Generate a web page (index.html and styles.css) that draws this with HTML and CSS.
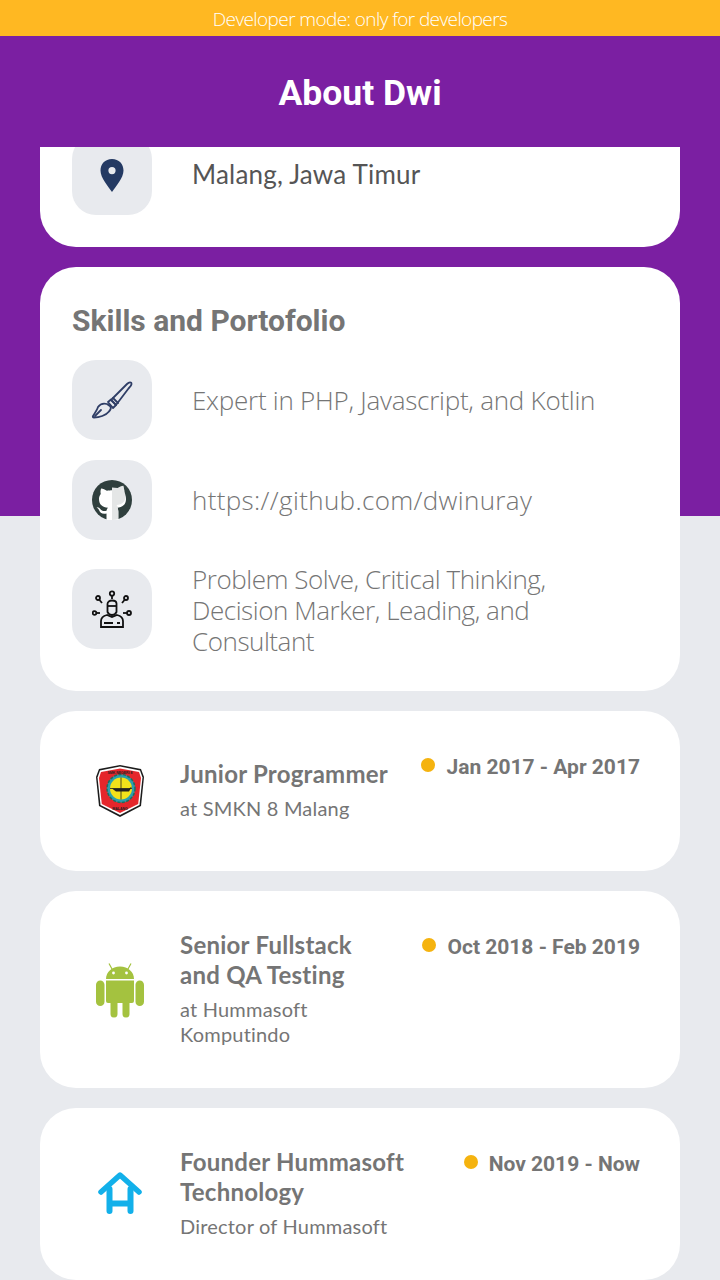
FILE: index.html
```html
<!DOCTYPE html>
<html lang="en">
<head>
<meta charset="utf-8">
<title>About Dwi</title>
<link rel="stylesheet" href="styles.css">
</head>
<body>
<div class="page">
  <div class="banner">Developer mode: only for developers</div>
  <div class="backdrop"></div>
  <header class="header"><h1>About Dwi</h1></header>
  <main class="scroll">
    <section class="card card-top">
      <div class="row">
        <div class="tile">
          <svg width="26" height="34" viewBox="0 0 26 34"><path fill="#243a63" fill-rule="evenodd" d="M13 1C6 1 1.500 6 1.500 12.500 1.500 20 9 28 13 34c4-6 11.500-14 11.500-21.500C24.500 6 20 1 13 1zm0 8a3.600 3.600 0 1 1 0 7.200A3.600 3.600 0 0 1 13 9z"/></svg>
        </div>
        <p class="location">Malang, Jawa Timur</p>
      </div>
    </section>
    <section class="card card-skills">
      <h2>Skills and Portofolio</h2>
      <div class="row">
        <div class="tile">
          <svg width="42" height="40" viewBox="0 0 42 40" fill="none" stroke="#2f3e66" stroke-width="1.800" stroke-linejoin="round" stroke-linecap="round"><path d="M20 20 36 4c2-2 4.500-2.500 4.500 0 0 1.500-1.500 3-3 4.500L25 25z"/><path d="M17 22l3-2.500 5 5.500-3 3z"/><path d="M22 18l5 5"/><path d="M16 24c-4-1-7 0-9 3-1 3-3 6-5 9-.500 1 0 1.500 1 1.500 5 0 12-2 15-6 2-2 2-4 1.500-5z"/><path d="M4 36l6-6"/></svg>
        </div>
        <p class="skill">Expert in PHP, Javascript, and Kotlin</p>
      </div>
      <div class="row">
        <div class="tile">
          <svg width="40" height="40" viewBox="0 0 40 40"><circle cx="20" cy="20" r="20" fill="#2f3f3d"/><path fill="#fff" d="M14.500 39.300v-5.800c-4.500 1-6.500-1-7.500-3.500-.6-1.300-1.500-2-2.500-2.700 1.500-.5 3 .3 4 2 1.200 1.800 3.500 2.200 6 1.400.2-1.200.7-2.200 1.500-2.900-5.500-.7-9-3-9-8.800 0-2 .7-3.700 1.800-5-.3-1-.6-3 .3-5.500 2 0 4 1 5.800 2.300 3-.8 8.200-.8 11.200 0 1.800-1.300 3.800-2.300 5.800-2.300.9 2.500.6 4.500.3 5.500 1.100 1.300 1.800 3 1.800 5 0 5.800-3.500 8.100-9 8.800 1 .9 1.500 2.300 1.500 4v8.500c-3.500 1-8 1-11.800 0z"/><path fill="#e4e6e6" d="M20 7.500c1.900 0 3.800.2 5.600.6 1.800-1.300 3.800-2.300 5.800-2.300.9 2.500.6 4.500.3 5.500 1.100 1.300 1.800 3 1.800 5 0 5.800-3.500 8.100-9 8.800 1 .9 1.500 2.300 1.500 4v10.200c-1.900.5-3.900.7-6 .7z"/></svg>
        </div>
        <p class="skill skill-link">https://github.com/dwinuray</p>
      </div>
      <div class="row row-multi">
        <div class="tile">
          <svg width="40" height="38" viewBox="0 0 40 38" fill="none" stroke="#111" stroke-width="1.800"><circle cx="20" cy="3.500" r="2.200"/><path d="M20 6v3"/><circle cx="6" cy="8" r="2"/><path d="M7.500 10l2.500 3"/><circle cx="34" cy="8" r="2"/><path d="M32.500 10 30 13"/><circle cx="2.500" cy="23" r="1.800"/><path d="M5 23h3"/><circle cx="37" cy="23" r="2"/><path d="M31 23h4"/><path d="M15.500 22v-8c0-2 2-3.500 4.500-3.500s4.500 1 4.500 3V22c-1 2-2.500 3-4.500 3s-3.500-1-4.500-3z"/><path d="M15.500 16h9"/><path d="M9 37v-6c0-3 2-5 6-6l5 2 5-2c4 1 6 3 6 6v6z"/><path d="M12 33h9M25 33h3"/></svg>
        </div>
        <p class="skill skill-multi">Problem Solve, Critical Thinking, Decision Marker, Leading, and Consultant</p>
      </div>
    </section>
    <section class="card job">
      <div class="job-logo">
        <svg width="52" height="54" viewBox="0 0 52 54"><path fill="#1c1c1c" d="M5 5 26 1l21 4 3 8-3 29-21 11L5 42 2 13z"/><path fill="#fff" d="M6 6.500 26 2.500l20 4 2.500 7-3 27.500L26 51 6.500 41l-3-27.500z"/><path fill="#e5262b" d="M7 8 26 4.500 45 8l2 6-2.800 26L26 49 7.800 40 5 14z"/><circle cx="27" cy="24.500" r="14" fill="#2a9fb0" stroke="#1d6f5c" stroke-width="1.500" stroke-dasharray="3 1.500"/><circle cx="27" cy="24.500" r="11" fill="#f2e21b"/><path fill="#222" d="M18 24.500h17l3-2-3 5H22z"/><path stroke="#222" stroke-width=".8" fill="none" d="M27 13.500v22M16 24.500h22"/><text class="badge-text" x="26" y="10" text-anchor="middle">SMK NEGERI 8</text><text class="badge-text" x="26" y="45.500" text-anchor="middle">MALANG</text></svg>
      </div>
      <div class="job-text">
        <h3>Junior Programmer</h3>
        <p>at SMKN 8 Malang</p>
      </div>
      <div class="job-date"><span class="dot"></span>Jan 2017 - Apr 2017</div>
    </section>
    <section class="card job">
      <div class="job-logo">
        <svg width="48" height="56" viewBox="0 0 48 56" fill="#a4c23f"><path d="M10 17c0-7 6-12.500 14-12.500S38 10 38 17z"/><path stroke="#a4c23f" stroke-width="1.200" d="M16 7l-3-5.500M32 7l3-5.500"/><path d="M10 18.500h28V39a2 2 0 0 1-2 2H12a2 2 0 0 1-2-2z"/><rect x="0" y="18.500" width="8.500" height="25.500" rx="4.250"/><rect x="39.500" y="18.500" width="8.500" height="25.500" rx="4.250"/><rect x="14.500" y="38" width="7" height="17.500" rx="3.500"/><rect x="26.500" y="38" width="7" height="17.500" rx="3.500"/><circle cx="17.500" cy="11" r="1.400" fill="#fff"/><circle cx="30.500" cy="11" r="1.400" fill="#fff"/></svg>
      </div>
      <div class="job-text">
        <h3>Senior Fullstack and QA Testing</h3>
        <p>at Hummasoft Komputindo</p>
      </div>
      <div class="job-date"><span class="dot"></span>Oct 2018 - Feb 2019</div>
    </section>
    <section class="card job">
      <div class="job-logo">
        <svg width="46" height="44" viewBox="0 0 46 44" fill="none" stroke="#12b0ea" stroke-linecap="round" stroke-linejoin="round"><path stroke-width="5.500" d="M4 20 23 3l19 17"/><path stroke-width="6" d="M12.500 17v22M33.500 17v22M12.500 31.500h21"/></svg>
      </div>
      <div class="job-text">
        <h3>Founder Hummasoft Technology</h3>
        <p>Director of Hummasoft</p>
      </div>
      <div class="job-date"><span class="dot"></span>Nov 2019 - Now</div>
    </section>
  </main>
</div>
</body>
</html>
```

FILE: styles.css
```css
* { box-sizing: border-box; margin: 0; padding: 0; }
html, body { height: 100%; }
body { background: #e8eaee; overflow: hidden; }
.page { position: relative; width: 720px; height: 1280px; display: flex; flex-direction: column; overflow: hidden; }
.banner { position: relative; height: 36px; flex: none; background: #ffb822; color: #fff; text-align: center; font: 300 19px/38px "Open Sans", sans-serif; letter-spacing: -0.6px; z-index: 1; }
.backdrop { position: absolute; left: 0; right: 0; top: 36px; height: 480px; background: #7b1fa2; }
.header { position: relative; height: 111px; flex: none; padding-top: 5px; display: flex; align-items: center; justify-content: center; }
.header h1 { color: #fff; font: 700 35.500px/1 Roboto, sans-serif; }
.scroll { position: relative; flex: 1; overflow: hidden; padding: 0 40px; display: flex; flex-direction: column; gap: 20px; }
.card { background: #fff; border-radius: 36px; flex: none; }
.card-top { margin-top: -52px; padding: 40px 32px 32px; }
.card-skills { padding: 32px 32px 33px; display: flex; flex-direction: column; gap: 20px; }
.card-skills h2 { font: 700 30px/43px Roboto, sans-serif; color: #757575; margin-bottom: -2px; }
.row { display: flex; align-items: center; gap: 40px; }
.row-multi { min-height: 98px; }
.tile { width: 80px; height: 80px; flex: none; background: #e8eaee; border-radius: 24px; display: flex; align-items: center; justify-content: center; }
.location { font: 400 26px/29px Lato, sans-serif; color: #555; letter-spacing: 0.2px; padding-bottom: 2px; }
.skill { font: 300 26px/31px "Open Sans", sans-serif; color: #757575; letter-spacing: -0.25px; }
.skill-link { letter-spacing: 0.35px; }
.skill-multi { padding-top: 3px; width: 372px; letter-spacing: -0.45px; }
.job { display: flex; align-items: flex-start; padding: 40px; min-height: 160px; }
.job-logo { width: 80px; align-self: center; flex: none; display: flex; justify-content: center; margin-right: 20px; }
.job-text { flex: 1; align-self: center; display: flex; flex-direction: column; gap: 7px; min-width: 0; margin: -1px 0 1px; }
.job-text h3 { font: 700 24px/30px Lato, sans-serif; color: #757575; letter-spacing: 0.25px; }
.job-text p { font: 400 20px/25px Lato, sans-serif; color: #757575; letter-spacing: 0.2px; }
.job-date { flex: none; margin-left: 28px; padding-top: 1px; display: flex; align-items: center; gap: 11px; font: 700 21px/30px Roboto, sans-serif; color: #757575; white-space: nowrap; }
.dot { width: 14px; height: 14px; border-radius: 50%; background: #f5b30f; margin-top: -5px; }
.badge-text { font: 700 3.500px "Liberation Sans", sans-serif; fill: #222; }
```
